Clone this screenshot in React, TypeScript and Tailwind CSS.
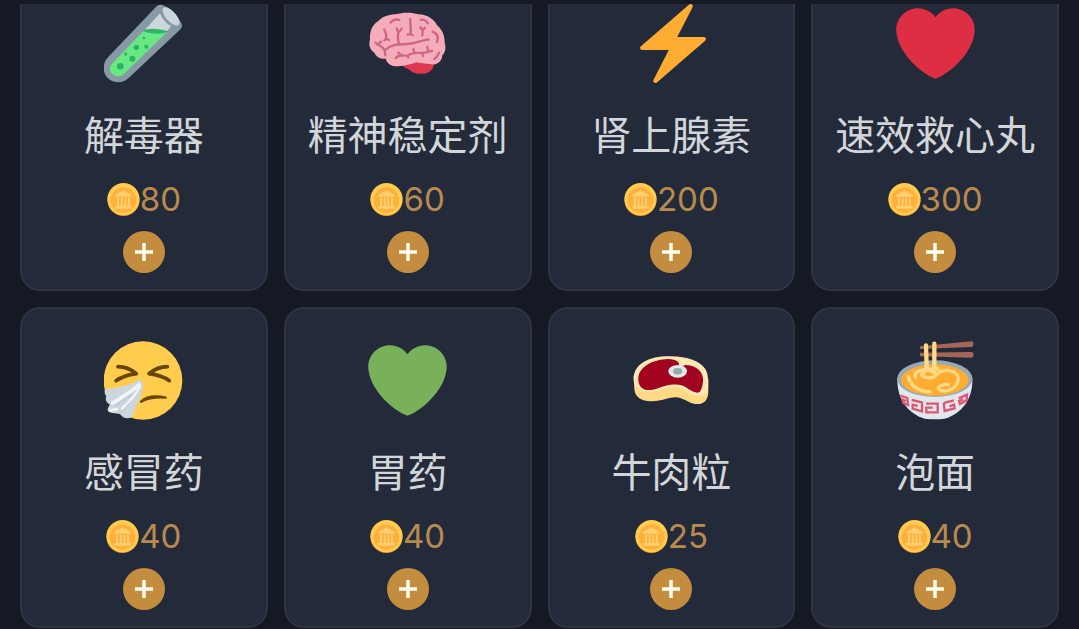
import type { ReactNode } from 'react';

type Item = { name: string; price: number; icon: ReactNode };

const iconClass = 'block size-[79px] shrink-0';
const heartPath =
  'M35.885 11.833c0-5.45-4.418-9.868-9.867-9.868-3.308 0-6.227 1.633-8.018 4.129-1.791-2.496-4.71-4.129-8.017-4.129-5.45 0-9.868 4.417-9.868 9.868 0 .772.098 1.52.266 2.241C1.751 22.587 11.216 31.568 18 34.034c6.783-2.466 16.249-11.447 17.617-19.959.17-.721.268-1.469.268-2.242z';

function TestTube() {
  return (
    <svg viewBox="43 12 237 237" className={iconClass} aria-hidden="true">
      <path fill="#8899a6" d="M55 172 198 22C204 14 214 12 224 18 246 28 264 46 275 70 279 78 276 84 270 90L117 234C100 250 73 252 55 235 37 217 38 190 55 172Z" />
      <path fill="#ccd6dd" d="M211 40C218 57 228 70 244 79L230 97 163 92Z" />
      <path fill="#67e882" d="M161 94 70 188C59 199 58 212 68 222 78 232 92 231 103 221L232 97Z" />
      <path fill="#2fb766" d="M160 93C170 83 205 84 236 94 225 104 180 103 160 93Z" />
      <ellipse cx="244" cy="49" rx="34" ry="15" transform="rotate(48 244 49)" fill="#ccd6dd" />
      <g fill="#28b463">
        <circle cx="163" cy="114" r="4" />
        <circle cx="140" cy="142" r="8" />
        <circle cx="170" cy="140" r="6" />
        <circle cx="108" cy="162" r="5" />
        <circle cx="128" cy="176" r="9" />
        <circle cx="92" cy="199" r="10" />
      </g>
    </svg>
  );
}

function Brain() {
  return (
    <svg viewBox="39 12 237 237" className={iconClass} aria-hidden="true">
      <path fill="#dd3850" d="M140 195C150 205 161 206 166 212 178 224 215 225 226 213 234 205 238 197 238 186L185 180Z" />
      <path fill="#f4abba" d="M45 118C44 96 50 76 69 64 83 49 103 43 122 43 145 36 172 37 190 43 218 43 239 60 246 76 261 88 270 107 269 128 274 142 271 157 262 166 261 180 252 190 241 193 222 194 203 190 184 187 168 194 149 197 130 199 110 200 96 191 92 176 77 178 63 170 58 158 45 151 40 134 45 118Z" />
      <g fill="none" stroke="#cf6781" strokeWidth="7" strokeLinecap="round" strokeLinejoin="round">
        <path d="M62 128C68 135 80 136 89 151C113 129 139 134 158 132 180 130 195 122 221 118M89 151 91 166M67 134 78 125" />
        <path d="M88 88C91 99 97 104 93 116L88 121M94 116 102 120M125 85 130 98C125 112 131 120 132 134M130 98 140 86M107 68C113 59 123 57 133 60M166 57C163 69 171 86 166 103M158 104 166 102 173 105M196 82 203 91 210 83M203 91 202 106M197 59C207 58 216 63 218 70M233 95C248 101 252 111 246 126M252 158C248 168 245 174 238 177" />
        <path d="M122 174C132 161 145 169 159 166 180 150 204 166 221 154L231 153M136 163 130 158M159 166 160 173M178 157 175 147M202 160 204 168M220 153 217 141" />
      </g>
    </svg>
  );
}

function Bolt() {
  return (
    <svg viewBox="-.7 0 36 36" className={iconClass} aria-hidden="true">
      <path fill="#ffac33" d="M32.938 15.651C32.792 15.26 32.418 15 32 15H19.925L26.89 1.458c.219-.426.106-.947-.271-1.243C26.437.071 26.218 0 26 0c-.233 0-.466.082-.653.243L18 6.588 3.347 19.243c-.316.273-.43.714-.284 1.105S3.582 21 4 21h12.075L9.11 34.542c-.219.426-.106.947.271 1.243.182.144.401.215.619.215.233 0 .466-.082.653-.243L18 29.412l14.653-12.655c.317-.273.43-.714.285-1.106z" />
    </svg>
  );
}

function Heart({ fill }: { fill: string }) {
  return (
    <svg viewBox="0 0 36 36" className={iconClass} aria-hidden="true">
      <path fill={fill} d={heartPath} />
    </svg>
  );
}

function SneezingFace() {
  return (
    <svg viewBox="43 33 237 237" className={iconClass} aria-hidden="true">
      <circle cx="160" cy="151.5" r="118" fill="#ffcc4d" />
      <g fill="none" stroke="#664500" strokeLinecap="round" strokeLinejoin="round">
        <path strokeWidth="11" d="M85 110C105 110 123 117 140 131 118 134 97 140 79 152" />
        <path strokeWidth="11" d="M233 110C213 110 195 117 178 131 201 134 222 140 239 152" />
        <path strokeWidth="7" d="M154 215C172 199 202 197 228 203 203 201 178 203 154 215" />
      </g>
      <path fill="#ccd6dd" d="M153 150C162 154 161 170 158 181 154 204 143 222 135 239 132 251 128 264 118 264 107 267 95 260 91 252 79 250 59 250 55 243 51 236 60 229 60 223 49 219 46 207 50 199 44 191 42 180 50 177 84 173 113 169 134 157 142 151 147 148 153 150Z" />
      <g fill="none" stroke="#f2f5f7" strokeLinecap="round">
        <path strokeWidth="11" d="M148 163C133 181 101 198 68 220" />
        <path strokeWidth="8" d="M151 168C139 193 119 216 98 235M61 242 82 237" />
      </g>
      <path fill="none" stroke="#b9c5ce" strokeWidth="3" d="M74 229 129 192M120 219 94 249" />
    </svg>
  );
}

function Steak() {
  return (
    <svg viewBox="36 33 237 237" className={iconClass} aria-hidden="true">
      <path fill="#ffd983" d="M41 137 43 178C45 206 72 217 105 213 132 212 158 196 181 204 201 211 212 224 240 222 259 218 265 202 265 184L265 146Z" />
      <path fill="#ffe8b6" d="M41 144C43 101 87 79 146 79 201 78 240 93 256 117 266 133 265 158 264 178 260 197 237 203 218 194 198 186 185 170 157 171 130 174 111 188 82 184 52 181 40 168 41 144Z" />
      <path fill="#a0041e" d="M55 145C57 108 101 88 145 87 164 88 179 94 177 105 181 112 188 108 196 105 225 105 247 122 249 145 250 158 247 175 240 185 231 193 218 184 205 177 192 164 171 162 152 164 125 167 100 185 76 179 61 175 54 162 55 145Z" />
      <ellipse cx="173" cy="124" rx="28" ry="19" fill="#e1e8ed" />
      <ellipse cx="173" cy="124" rx="14" ry="10" fill="#99aaa9" />
    </svg>
  );
}

function Noodles() {
  return (
    <svg viewBox="47 33 237 237" className={iconClass} aria-hidden="true">
      <path fill="#a76557" d="M119 49 274 34C282 35 281 50 274 51L119 57ZM119 68 274 66C281 67 282 82 274 83L119 79Z" />
      <path fill="#e1e8ed" d="M51 146C50 204 79 249 133 266Q163 270 193 266C246 250 278 205 276 146Z" />
      <ellipse cx="163.5" cy="146" rx="113" ry="55" fill="#99aab5" />
      <ellipse cx="163.5" cy="150" rx="101" ry="47" fill="#ffac33" />
      <g fill="none" stroke="#ffd983" strokeWidth="10" strokeLinecap="round">
        <path d="M84 140C89 161 107 179 132 184L149 185M105 142C99 124 129 115 150 122 177 130 165 148 139 142 122 140 119 130 132 127M151 142C170 143 169 125 187 123 218 115 240 134 232 156 224 179 193 190 175 178 169 169 192 161 205 164" />
        <path strokeWidth="13" d="M137 46 139 111C141 123 158 121 171 116M162 41 162 117" />
      </g>
      <g fill="none" stroke="#dd5773" strokeWidth="7">
        <path d="M60 197 81 204 83 225 69 219 67 209 77 213" />
        <path d="M94 210 125 217V244L97 236V224L112 228" />
        <path d="M137 221H172V247H138V233H157" />
        <path d="M190 219 221 211M190 219 193 243 223 235 221 224 207 229" />
        <path d="M235 205 260 194 259 211 239 222 236 213 249 208" />
      </g>
    </svg>
  );
}

function Coin() {
  return (
    <svg viewBox="0 0 36 36" className="block size-[33px] shrink-0" aria-hidden="true">
      <circle cx="18" cy="18.5" r="17.5" fill="#f4a02c" />
      <circle cx="18" cy="17.5" r="17.5" fill="#ffcc4d" />
      <circle cx="18" cy="18" r="14" fill="#ffd77a" />
      <circle cx="18" cy="18.5" r="14" fill="#ffb03a" />
      <path fill="#ffd070" d="M9 13 18 8l9 5v2H9zM11 16h2v9h-2zm4 0h2v9h-2zm4 0h2v9h-2zm4 0h2v9h-2zM9 25h18v3H9z" />
    </svg>
  );
}

const items: Item[] = [
  { name: '解毒器', price: 80, icon: <TestTube /> },
  { name: '精神稳定剂', price: 60, icon: <Brain /> },
  { name: '肾上腺素', price: 200, icon: <Bolt /> },
  { name: '速效救心丸', price: 300, icon: <Heart fill="#dd2e44" /> },
  { name: '感冒药', price: 40, icon: <SneezingFace /> },
  { name: '胃药', price: 40, icon: <Heart fill="#78b159" /> },
  { name: '牛肉粒', price: 25, icon: <Steak /> },
  { name: '泡面', price: 40, icon: <Noodles /> },
];

function ItemCard({ item }: { item: Item }) {
  return (
    <li className="flex min-w-0 flex-col items-center rounded-[20px] border-2 border-[#2e3442] bg-[#232a3a] pt-8 pb-4">
      {item.icon}
      <h2 className="mt-6 text-[40px] leading-[56px] whitespace-nowrap text-[#d3d6d8]">{item.name}</h2>
      <p className="mt-4 flex items-center font-[Inter,sans-serif] text-[33px] leading-10 text-[#b98a4d]">
        <Coin />
        <span>{item.price}</span>
      </p>
      <button
        type="button"
        aria-label={`添加${item.name}`}
        className="mt-3 flex size-[42px] items-center justify-center rounded-full bg-[#c48c3e] text-white"
      >
        <svg viewBox="0 0 18 18" className="size-[18px]" aria-hidden="true">
          <path d="M9 0v18M0 9h18" stroke="#fffdf0" strokeWidth="3.5" />
        </svg>
      </button>
    </li>
  );
}

export default function App() {
  return (
    <main className="h-screen overflow-hidden bg-[#141923] px-5 pt-1 font-['Noto_Sans','Noto_Sans_CJK_SC',sans-serif]">
      <div className="h-full overflow-hidden">
        <ul className="-mt-[34px] grid grid-cols-4 gap-4">
          {items.map((item) => (
            <ItemCard key={item.name} item={item} />
          ))}
        </ul>
      </div>
    </main>
  );
}
